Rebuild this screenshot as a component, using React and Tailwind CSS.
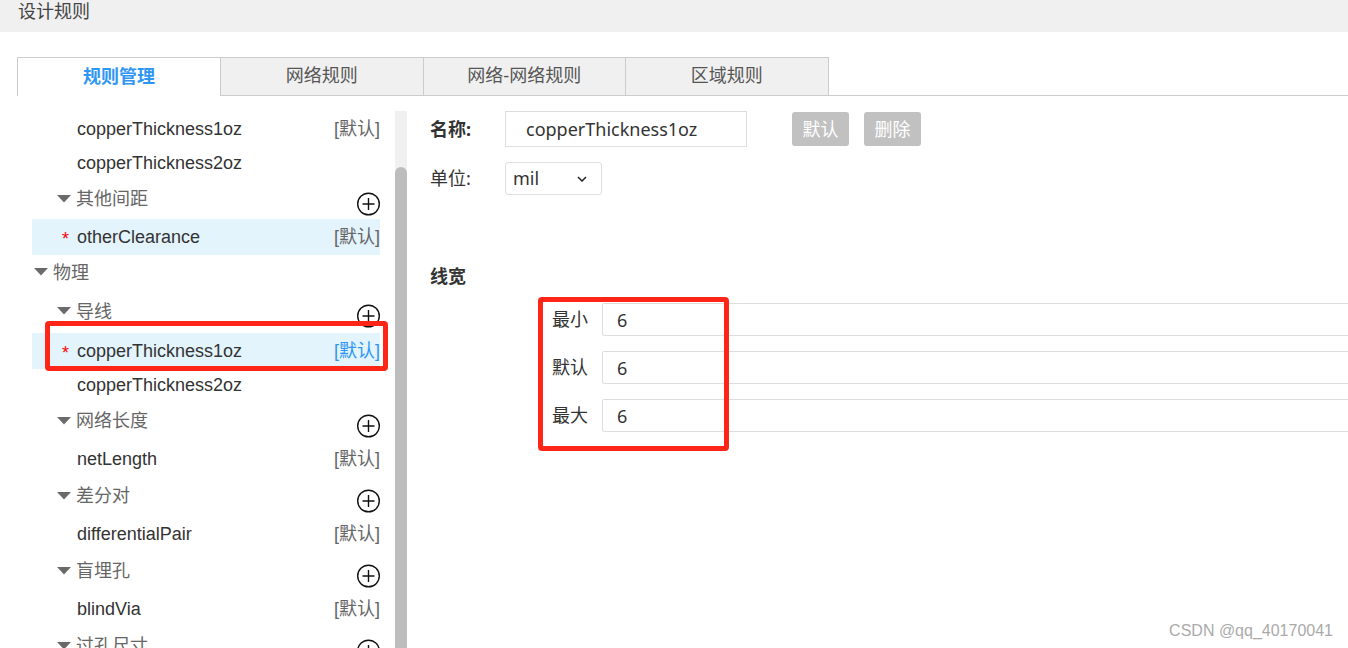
const CJK = '"Noto Sans CJK SC"';
const Plus = () => (
  <svg width="24" height="24" viewBox="0 0 24 24" className="mt-2 shrink-0" fill="none" stroke="#111" strokeWidth="1.4">
    <circle cx="12.5" cy="12" r="10.8" />
    <path d="M6.5 12h12M12.5 6v12" />
  </svg>
);
const Arrow = () => (
  <svg width="14" height="8" viewBox="0 0 14 8" className="shrink-0 -mt-0.5"><path d="M0 0h14L7 7.5z" fill="#6a6a6a" /></svg>
);
const rows = [
  { t: 'copperThickness1oz', leaf: 1, def: 1, h: 'h-[36px]' },
  { t: 'copperThickness2oz', leaf: 1, h: 'h-[33px]' },
  { t: '其他间距', h: 'h-[39px]', plus: 1 },
  { t: 'otherClearance', leaf: 1, def: 1, star: 1, h: 'h-[36px]' },
  { t: '物理', top: 1, h: 'h-[36px]' },
  { t: '导线', h: 'h-[42px]', plus: 1 },
  { t: 'copperThickness1oz', leaf: 1, def: 1, star: 1, blue: 1, h: 'h-[36px]' },
  { t: 'copperThickness2oz', leaf: 1, h: 'h-[33px]' },
  { t: '网络长度', h: 'h-[39px]', plus: 1 },
  { t: 'netLength', leaf: 1, def: 1, h: 'h-[36px]' },
  { t: '差分对', h: 'h-[39px]', plus: 1 },
  { t: 'differentialPair', leaf: 1, def: 1, h: 'h-[36px]' },
  { t: '盲埋孔', h: 'h-[39px]', plus: 1 },
  { t: 'blindVia', leaf: 1, def: 1, h: 'h-[36px]' },
  { t: '过孔尺寸', h: 'h-[39px]', plus: 1 },
];
const Row = ({ r }) => {
  if (r.leaf) {
    return (
      <div className={`${r.h} shrink-0 flex items-center justify-between ${r.star ? 'bg-[#e3f4fd]' : ''}`}>
        <div className="flex items-center pl-[30px]">
          <span className={`w-[15px] text-[#f00] text-[18px] leading-none mt-1 ${r.star ? '' : 'invisible'}`}>*</span>
          <span className="text-[#333]">{r.t}</span>
        </div>
        {r.def ? <span className={r.blue ? 'text-[#2f96f5]' : 'text-[#666]'}>[默认]</span> : null}
      </div>
    );
  }
  return (
    <div className={`${r.h} shrink-0 flex items-center justify-between ${r.top ? 'pl-[2px]' : 'pl-[25px]'}`}>
      <div className="flex items-center gap-[5px] text-[#666]"><Arrow /><span>{r.t}</span></div>
      {r.plus ? <Plus /> : null}
    </div>
  );
};
const Tab = ({ children, active }) => (
  <div className={`h-[39px] flex items-center justify-center border-t border-r border-[#ccc] text-[18px] ${active ? 'w-[204px] border-l bg-white font-bold text-[#2f96f5]' : 'w-[202.5px] border-b bg-[#f0f0f0] text-[#555]'}`}>
    {children}
  </div>
);
const Num = ({ label }) => (
  <div className="flex items-center h-[33px]">
    <span className="w-[51px] pr-[14px] text-right shrink-0 text-[#333] whitespace-nowrap">{label}</span>
    <input readOnly value="6" className="flex-1 min-w-0 h-[33px] border border-[#ddd] rounded-[2px] pl-[14px] text-[#333] outline-none" style={{ fontFamily: `"Noto Sans", ${CJK}, sans-serif` }} />
  </div>
);
const Btn = ({ children }) => (
  <div className="w-[57px] h-[34px] bg-[#c1c1c1] rounded-[3px] text-white flex items-center justify-center">{children}</div>
);
export default function App() {
  const right = { fontFamily: `"Noto Sans", ${CJK}, sans-serif` };
  return (
    <div className="relative h-[648px] w-full overflow-hidden bg-white text-[18px]" style={{ fontFamily: `"Liberation Sans", ${CJK}, sans-serif` }}>
      <div className="h-[32px] bg-[#f0f0f0] pl-[18px] text-[#444] leading-[24px]">设计规则</div>
      <div className="mt-[25px] pl-[17px] flex h-[39px]">
        <Tab active>规则管理</Tab>
        <Tab>网络规则</Tab>
        <Tab>网络-网络规则</Tab>
        <Tab>区域规则</Tab>
        <div className="flex-1 border-b border-[#ccc]" />
      </div>
      <div className="flex mt-[15px] h-[537px] pl-[32px] overflow-hidden">
        <div className="w-[348px] shrink-0 flex flex-col">
          {rows.map((r, i) => <Row key={i} r={r} />)}
        </div>
        <div className="ml-[15px] w-[12px] shrink-0 flex flex-col bg-[#f0f0f0] pt-[56px]">
          <div className="flex-1 bg-[#bdbdbd] rounded-t-[6px]" />
        </div>
        <div className="flex-1 min-w-0 pl-[23px] text-[#333]" style={right}>
          <div className="flex items-center h-[36px]">
            <span className="w-[75px] font-bold shrink-0">名称:</span>
            <div className="w-[242px] h-[36px] border border-[#ddd] pl-[20px] flex items-center text-[#333]">copperThickness1oz</div>
            <div className="ml-[45px] flex gap-[15px]"><Btn>默认</Btn><Btn>删除</Btn></div>
          </div>
          <div className="flex items-center h-[33px] mt-[15px]">
            <span className="w-[75px] shrink-0">单位:</span>
            <div className="w-[97px] h-[33px] border border-[#ddd] rounded-[3px] pl-[7px] pr-[14px] flex items-center justify-between">
              <span>mil</span>
              <svg width="10" height="6" viewBox="0 0 10 6" fill="none" stroke="#222" strokeWidth="1.5"><path d="M1 1l4 4 4-4" /></svg>
            </div>
          </div>
          <div className="mt-[68px] font-bold leading-[27px]">线宽</div>
          <div className="mt-[13px] ml-[121px] -mr-[4px] flex flex-col gap-[15px]">
            <Num label="最小" />
            <Num label="默认" />
            <Num label="最大" />
          </div>
        </div>
      </div>
      <div className="absolute left-[45px] top-[321px] w-[343px] h-[50px] border-[5px] border-[#ff2618] rounded-[4px]" />
      <div className="absolute left-[538px] top-[297px] w-[191px] h-[154px] border-[5px] border-[#ff2618] rounded-[4px]" />
      <div className="absolute right-[15px] top-[620px] text-[16px] leading-[22px] text-[#aaa] whitespace-nowrap">CSDN @qq_40170041</div>
    </div>
  );
}
